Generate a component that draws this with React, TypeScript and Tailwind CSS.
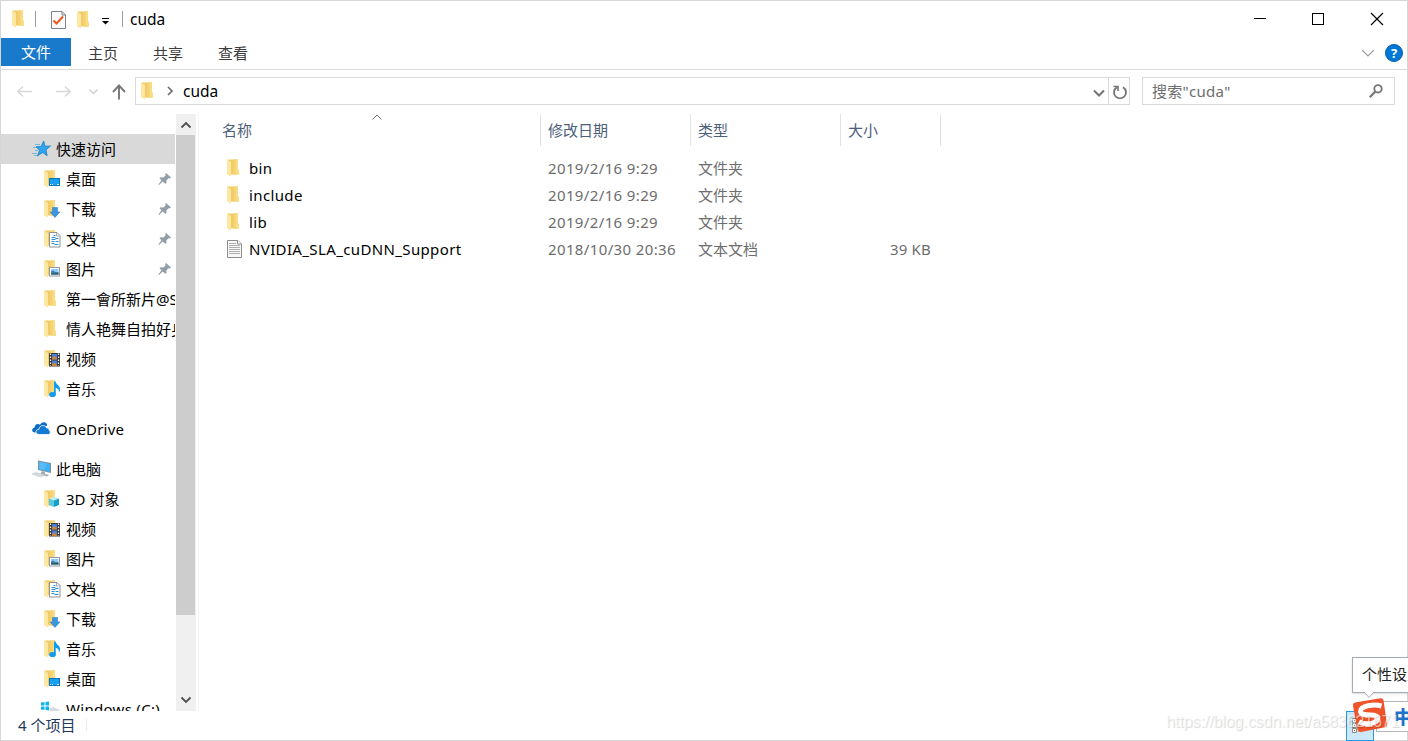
import type { ReactNode } from "react";

type Glyph =
  | "folder"
  | "desktop"
  | "download"
  | "document"
  | "picture"
  | "video"
  | "music"
  | "objects";

interface NavItem {
  icon: Glyph;
  label: string;
  pinned?: boolean;
}

const quickAccess: NavItem[] = [
  { icon: "desktop", label: "桌面", pinned: true },
  { icon: "download", label: "下载", pinned: true },
  { icon: "document", label: "文档", pinned: true },
  { icon: "picture", label: "图片", pinned: true },
  { icon: "folder", label: "第一會所新片@S" },
  { icon: "folder", label: "情人艳舞自拍好身" },
  { icon: "video", label: "视频" },
  { icon: "music", label: "音乐" },
];

const thisPc: NavItem[] = [
  { icon: "objects", label: "3D 对象" },
  { icon: "video", label: "视频" },
  { icon: "picture", label: "图片" },
  { icon: "document", label: "文档" },
  { icon: "download", label: "下载" },
  { icon: "music", label: "音乐" },
  { icon: "desktop", label: "桌面" },
];

const files = [
  { name: "bin", date: "2019/2/16 9:29", type: "文件夹", size: "" },
  { name: "include", date: "2019/2/16 9:29", type: "文件夹", size: "" },
  { name: "lib", date: "2019/2/16 9:29", type: "文件夹", size: "" },
  {
    name: "NVIDIA_SLA_cuDNN_Support",
    date: "2018/10/30 20:36",
    type: "文本文档",
    size: "39 KB",
  },
];

const Overlay = ({ icon }: { icon: Glyph }) => {
  switch (icon) {
    case "desktop":
      return (
        <g>
          <rect x="5.5" y="8.5" width="10" height="7" fill="#18a0f5" stroke="#0b71b8" />
          <path d="M6 14.5h1M8 14.5h1M13 14.5h2" stroke="#d5efff" />
        </g>
      );
    case "download":
      return (
        <path
          d="M8.5 7.5h5v4.5h2.4L11 17.4 6.1 12h2.4z"
          fill="#3a96dd"
          stroke="#2f7fc4"
          strokeWidth=".6"
        />
      );
    case "document":
      return (
        <g>
          <path d="M5.5 2.5h7.5l3 3v11.5H5.5z" fill="#fff" stroke="#8b9197" />
          <path d="M12.5 2.8v3.2h3.2" fill="none" stroke="#8b9197" strokeWidth=".8" />
          <path
            d="M9.5 5.5h2M7.5 7.5h4M11.500 8.5h3M7.5 9.5h4M11.500 11.5h3M7.5 11.5h3M10.500 14.5h4M7.5 13.500h3"
            stroke="#2b8fd6"
            strokeWidth="1.200"
          />
        </g>
      );
    case "picture":
      return (
        <g>
          <rect x="5.5" y="7.500" width="10" height="8.500" fill="#fff" stroke="#9299a0" />
          <rect x="7" y="9" width="7.500" height="5.500" fill="#8ecbf5" />
          <path d="M7 11.300l2.200-.8 2 1.400 3.300.4v2.200H7z" fill="#3f7fb5" />
          <path d="M7 13.300l7.500-.6v1.800H7z" fill="#315f5d" />
        </g>
      );
    case "video":
      return (
        <g>
          <rect x="5" y="3" width="11" height="13.500" fill="#3a3a3a" />
          <rect x="8" y="4" width="5" height="5.500" fill="#4a7fe0" />
          <rect x="8" y="10.500" width="5" height="5.500" fill="#4a7fe0" />
          <path d="M8 7.500l2.500-1.600L13 8.500v1H8zM8 14l2.500-1.600L13 15v1H8z" fill="#c98638" />
          <path d="M6.500 3.500v12.500M14.500 3.500v12.500" stroke="#fff" strokeWidth="1.200" strokeDasharray="1.400 1.600" />
        </g>
      );
    case "music":
      return (
        <g fill="#0f9bf0">
          <path d="M10 1.500h1.600c.3 3.200 4.900 4 4.500 8.100-.1 1.500-.7 2.400-1.300 3 .5-2.900-.6-4.200-3.100-4.900v6.800H10z" />
          <ellipse cx="8.500" cy="14.500" rx="3.300" ry="2.600" />
        </g>
      );
    case "objects":
      return (
        <g>
          <path d="M5 8.800L10 7l5 1.500-5 2z" fill="#b8eef8" />
          <path d="M5 8.800l5 1.700V17l-5-2z" fill="#53cbe6" />
          <path d="M10 10.500l5-2V15l-5 2z" fill="#169fc4" />
        </g>
      );
    default:
      return null;
  }
};

const FolderIcon = ({ icon = "folder" }: { icon?: Glyph }) => (
  <svg className="shrink-0" width="18" height="18" viewBox="0 0 18 18">
    <path d="M.5.500H11v10l1 .8v4.200H4z" fill="#f0cb68" />
    <path d="M6.500.500H11v10l1 .8v4.200H6.500z" fill="#f5d474" />
    <path d="M9 .5h2v10l1 .8v4.200H9z" fill="#f9dd84" />
    <path d="M0 .5l4 2.500v14.500L0 15.500z" fill="#fee7a2" />
    <Overlay icon={icon} />
  </svg>
);

const TextFileIcon = () => (
  <svg className="shrink-0" width="18" height="18" viewBox="0 0 18 18">
    <path d="M.5.500h10.500l3.500 3.500v13.500H.5z" fill="#f7f7f7" stroke="#8c8c8c" />
    <path d="M10.500.500v3.500h4" fill="#fff" stroke="#8c8c8c" />
    <path d="M2 3.500h7M2 5.500h11M2 7.500h11M2 9.500h11M2 11.500h11M2 13.500h11" stroke="#b0b0b0" />
  </svg>
);

const PinIcon = () => (
  <svg width="14" height="14" viewBox="0 0 14 14">
    <path
      d="M8 1l5 4.500-1.500.9-1-.1L8.300 8.400l.3 2.600-1.300.8L4.700 9.500 1 13l-.6-.4L3.500 8.300 1.500 6.300l1-1 2.900.3 2.200-2.100-.4-1.400z"
      fill="#929da6"
    />
  </svg>
);

const Chevron = ({
  className,
  d,
  width = 1.5,
}: {
  className: string;
  d: string;
  width?: number;
}) => (
  <svg className={className} viewBox="0 0 12 12" fill="none" stroke="currentColor" strokeWidth={width}>
    <path d={d} />
  </svg>
);

const NavHeader = ({
  icon,
  label,
  active,
}: {
  icon: ReactNode;
  label: string;
  active?: boolean;
}) => (
  <div
    className={`flex h-[30px] shrink-0 items-center gap-[5px] pl-[31px] ${
      active ? "bg-[#d9d9d9]" : ""
    }`}
  >
    {icon}
    <span className="whitespace-nowrap">{label}</span>
  </div>
);

const NavRow = ({ icon, label, pinned }: NavItem) => (
  <div className="flex h-[30px] shrink-0 items-center pl-[43px]">
    <FolderIcon icon={icon} />
    <span className="ml-1 flex-1 whitespace-nowrap">{label}</span>
    {pinned && (
      <span className="mr-[3px]">
        <PinIcon />
      </span>
    )}
  </div>
);

const TitleBar = () => (
  <div className="flex h-[37px] shrink-0 items-center pb-px pl-[11px] text-black">
    <FolderIcon />
    <div className="ml-[5px] h-4 w-px bg-[#9b9b9b]" />
    <svg className="ml-[15px] mt-px" width="15" height="18" viewBox="0 0 15 18">
      <path d="M.5.500h10.500l3.500 3.500v13.500H.5z" fill="#fbfbfb" stroke="#7d8287" />
      <path d="M11 .5v3.500h3.500" fill="none" stroke="#7d8287" />
      <path d="M2.500 9.500l3 3L12 5.500" fill="none" stroke="#f0561d" strokeWidth="2" />
    </svg>
    <span className="ml-[11px] mt-px">
      <FolderIcon />
    </span>
    <svg className="ml-[6px] mt-[4px]" width="8" height="8" viewBox="0 0 8 8">
      <path d="M1 1.500h7" stroke="#000" />
      <path d="M1 4h7L4.500 7.500z" />
    </svg>
    <div className="ml-[13px] h-4 w-px bg-[#9b9b9b]" />
    <span className="ml-[7px] text-[15.500px]">cuda</span>
    <div className="ml-auto flex items-center pr-[23px]">
      <svg width="130" height="14" viewBox="0 0 130 14" fill="none" stroke="#000">
        <path d="M0 6.500h12" />
        <rect x="58.500" y="1.500" width="11" height="11" />
        <path d="M117 1l12 12M129 1l-12 12" strokeWidth="1.200" />
      </svg>
    </div>
  </div>
);

const RibbonTabs = () => (
  <div className="flex h-[32px] shrink-0 items-start border-b border-[#dadada] text-[#3b3b3b]">
    <div className="flex h-[28px] w-[70px] items-center justify-center bg-[#1979ca] text-white">
      文件
    </div>
    {["主页", "共享", "查看"].map((tab) => (
      <div key={tab} className="flex h-[29px] w-[65px] items-center justify-center pr-px">
        {tab}
      </div>
    ))}
    <div className="ml-auto flex h-[30px] items-center gap-[10px] pr-[4px]">
      <Chevron className="size-[14px] text-[#9a9a9a]" d="M1 3.500l5 5 5-5" width={1.1} />
      <div className="flex size-[18px] items-center justify-center rounded-full border border-[#0a5ca8] bg-[#0078d7] text-[13px] font-bold leading-none text-white">
        ?
      </div>
    </div>
  </div>
);

const AddressBar = () => (
  <div className="flex h-[44px] shrink-0 items-start pt-[7px]">
    <div className="flex h-[28px] w-[134px] items-center">
      <svg width="134" height="28" viewBox="0 0 134 28" fill="none" strokeWidth="1.500">
        <path d="M31 14.500H17M22 9.500l-5 5 5 5" stroke="#d8d8d8" />
        <path d="M55 14.500h14M64 9.500l5 5-5 5" stroke="#d8d8d8" />
        <path d="M88.500 12.500l4 4 4-4" stroke="#d0d0d0" />
        <path d="M118 22.500V9M112 15l6-6.500 6 6.500" stroke="#777" strokeWidth="1.900" />
      </svg>
    </div>
    <div className="flex h-[28px] w-[995px] items-center border border-[#d9d9d9] pl-[5px] text-black">
      <FolderIcon />
      <Chevron className="ml-[5px] size-[12px] text-[#6d6d6d]" d="M4 2l4 4-4 4" width={1.7} />
      <span className="ml-[7px] pb-px text-[15.500px]">cuda</span>
      <Chevron className="ml-auto mr-[3px] mt-[3px] size-[12px] text-[#747474]" d="M1 3.500l5 5 5-5" width={2} />
      <div className="flex h-full w-[21px] items-center justify-center border-l border-[#d9d9d9]">
        <svg className="ml-[2px] mt-px" width="16" height="16" viewBox="0 0 16 16" fill="none" stroke="#777" strokeWidth="1.900">
          <path d="M11 3.200A6 6 0 1 1 5 3.200" />
          <path d="M1.500 2.500H6V7" strokeWidth="1.600" />
        </svg>
      </div>
    </div>
    <div className="ml-3 flex h-[28px] w-[253px] items-center border border-[#d9d9d9] pl-[9px] pr-[11px] text-[#6d6d6d]">
      <span className="tracking-[0.3px]">搜索"cuda"</span>
      <svg className="ml-auto" width="14" height="14" viewBox="0 0 14 14" fill="none" stroke="#757575">
        <circle cx="9" cy="4.800" r="3.700" strokeWidth="1.800" />
        <path d="M6.300 7.600L.8 13.200" strokeWidth="2.200" />
      </svg>
    </div>
  </div>
);

const StarIcon = () => (
  <svg width="19" height="18" viewBox="0 0 19 18">
    <path d="M3 4.500h5M1 7.500h5M3 10.500h3M0 13.500h5M2 15.500h3" stroke="#7ab8dc" />
    <path
      d="M11.700 1l1.300 5.200 5.500-.2-4.500 3.900 1.200 5.800-4.500-3.200-5.200 3.400 2-5.700-3.500-3.400 5-.4z"
      fill="#2ea3ee"
      stroke="#2180c0"
      strokeWidth=".8"
    />
  </svg>
);

const CloudIcon = () => (
  <svg width="19" height="18" viewBox="0 0 19 18">
    <path
      d="M3.500 12.500H2.800C-.8 12-.4 8.200 2.500 7.800 2.500 4.200 6 3 8 4.800 9.800 1 14.800 1.500 15.200 5.500"
      fill="#0a6cc4"
    />
    <path
      d="M7 14.500c-4.200-.2-4-5 0-5.200C7.200 4.800 13.500 4.200 14.600 8c2-.3 2.600 1.200 2.400 2.300 2 .7 1.500 4-.6 4.200z"
      fill="#1279d4"
      stroke="#fff"
      strokeWidth=".8"
    />
  </svg>
);

const ComputerIcon = () => (
  <svg width="19" height="18" viewBox="0 0 19 18">
    <path d="M6 .5l13 2.500v10L6 10z" fill="#7b8e9b" />
    <path d="M7 1.800l11 2.100v7.800L7 9.200z" fill="#3db1f5" />
    <path d="M7 1.800l8 1.500-3 7-5-1.100z" fill="#55baf7" />
    <path d="M10 11l3 1v2l4 1-2 1.500-7-2z" fill="#a2abb1" />
    <path d="M0 14l4-1.500 9 2.500-4 2z" fill="#d5dade" stroke="#b8c0c6" strokeWidth=".5" />
  </svg>
);

const DriveIcon = () => (
  <svg className="shrink-0" width="20" height="18" viewBox="0 0 20 18">
    <path d="M0 2.500L3.500 2v3.500H0zM4.500 1.900L8 1.500v4H4.500zM0 6.500h3.500V10L0 9.500zM4.500 6.500H8v4l-3.500-.5z" fill="#0cb4ea" />
    <path d="M8.500 8l4-1 6 3v5H5v-4h3.500z" fill="#d7dbdf" />
  </svg>
);

const Sidebar = () => (
  <div className="flex h-full w-[195px] shrink-0">
    <div className="flex w-[174px] flex-col overflow-hidden pt-5 text-black">
      <NavHeader icon={<StarIcon />} label="快速访问" active />
      {quickAccess.map((item) => (
        <NavRow key={item.label} {...item} />
      ))}
      <div className="h-[10px] shrink-0" />
      <div className="tracking-[0.2px]">
        <NavHeader icon={<CloudIcon />} label="OneDrive" />
      </div>
      <div className="h-[10px] shrink-0" />
      <NavHeader icon={<ComputerIcon />} label="此电脑" />
      {thisPc.map((item) => (
        <NavRow key={item.label} {...item} />
      ))}
      <div className="flex h-[30px] shrink-0 items-center gap-[5px] pl-[40px]">
        <DriveIcon />
        <span className="whitespace-nowrap tracking-[0.3px]">Windows (C:)</span>
      </div>
    </div>
    <div className="ml-[1px] flex w-[20px] flex-col items-center bg-[#f0f0f0]">
      <div className="flex h-[21px] items-center">
        <Chevron className="mr-px size-[12px] text-[#505050]" d="M1.500 8.500L6 4l4.500 4.500" width={1.8} />
      </div>
      <div className="h-[480px] w-[19px] self-start bg-[#cdcdcd]" />
      <div className="mt-auto flex h-[22px] items-center">
        <Chevron className="mr-px size-[12px] text-[#505050]" d="M1.500 3.500L6 8l4.500-4.500" width={1.8} />
      </div>
    </div>
  </div>
);

const FileList = () => (
  <div className="ml-[2px] flex-1 border-l border-[#f5f5f5]">
    <div className="flex h-[32px] items-center text-[#4c607a]">
      <div className="relative flex h-full w-[342px] items-center border-r border-[#e2e2e2] pl-[23px]">
        名称
        <Chevron
          className="absolute left-[172px] top-[-3px] size-[12px] text-[#6d6d6d]"
          d="M1.500 8.500L6 4l4.500 4.500"
          width={1}
        />
      </div>
      <div className="flex h-full w-[150px] items-center border-r border-[#e2e2e2] pl-[7px]">修改日期</div>
      <div className="flex h-full w-[150px] items-center border-r border-[#e2e2e2] pl-[7px]">类型</div>
      <div className="flex h-full w-[100px] items-center border-r border-[#e2e2e2] pl-[7px]">大小</div>
    </div>
    <div className="mt-[8px] flex flex-col">
      {files.map((file) => (
        <div key={file.name} className="flex h-[27px] items-center text-[#6d6d6d]">
          <div className="flex w-[349px] items-center pl-[28px] text-black">
            {file.size ? <TextFileIcon /> : <FolderIcon />}
            <span className="ml-1 tracking-[0.37px]">{file.name}</span>
          </div>
          <span className="w-[150px] tracking-[0.37px]">{file.date}</span>
          <span className="w-[150px]">{file.type}</span>
          <span className="w-[83px] text-right tracking-[0.2px]">{file.size}</span>
        </div>
      ))}
    </div>
  </div>
);

// Floating input method bar in the corner, with its tooltip
const InputMethod = () => (
  <>
    <div className="absolute left-[1346px] top-[711px] h-[30px] w-[28px] border border-[#2c9bdc] bg-[#cce8f6]">
      <svg className="ml-[5px] mt-[6px]" width="18" height="17" viewBox="0 0 18 17" fill="#fff" stroke="#8a8a8a">
        <path d="M.5.500h4v4h-4zM.5 5.500h4v4h-4zM.5 10.500h4v4h-4z" />
        <path d="M2 2.500h1M2 7.500h1" stroke="#2878b8" />
        <path d="M2 12.500h1" stroke="#b84320" />
      </svg>
    </div>
    <div className="absolute left-[1376px] top-[701px] flex h-[31px] w-[40px] items-center border border-[#b4b6ba] bg-white pl-[17px] text-[18px] font-black text-[#1f74c9]">
      中
    </div>
    <svg className="absolute left-[1352px] top-[697px]" width="36" height="36" viewBox="0 0 36 36">
      <path d="M3 5.500L28.500 1.200q2.500-.4 3 2L35 27q.4 2.500-2 3.200L9 35q-3 .5-3.500-2.500L1 9q-.3-3 2-3.500z" fill="#ef5329" />
      <path
        d="M29.500 9C22 7 11.500 8.500 9 12.500c-2.500 5 4 5.500 10 5.500 8 0 9 5 3 7.500-4 1.700-10 1.700-15-.5"
        fill="none"
        stroke="#fff"
        strokeWidth="5"
      />
    </svg>
    <div className="absolute left-[1352px] top-[657px] h-[36px] w-[70px] whitespace-nowrap border border-[#a4aab3] bg-white pl-[9px] leading-[32px] text-[#222] shadow-sm">
      个性设置
    </div>
    <svg className="absolute left-[1363px] top-[692px]" width="12" height="7" viewBox="0 0 12 7">
      <path d="M1 0l5 5.500L11 0" fill="#fff" stroke="#a4aab3" />
    </svg>
    <div className="absolute left-[1166px] top-[711px] whitespace-nowrap font-['Liberation_Sans',sans-serif] text-[16px] leading-[22px] tracking-[-0.1px] text-white/60 [text-shadow:1px_1px_1px_rgba(0,0,0,0.16)]">
      https://blog.csdn.net/a583621671
    </div>
  </>
);

export default function App() {
  return (
    <div className="relative h-[741px] w-[1408px] overflow-hidden bg-white font-['Noto_Sans','Noto_Sans_CJK_SC',sans-serif] text-[15px] leading-5">
      <div className="flex h-full flex-col border border-[#d6d6d6]">
        <TitleBar />
        <RibbonTabs />
        <AddressBar />
        <div className="flex h-[597px] shrink-0">
          <Sidebar />
          <FileList />
        </div>
        <div className="flex flex-1 items-center pb-[2px] pl-[17px] text-[#1e395b]">
          4 个项目
          <div className="ml-[11px] h-3 w-px bg-[#ededed]" />
        </div>
      </div>
      <InputMethod />
    </div>
  );
}
